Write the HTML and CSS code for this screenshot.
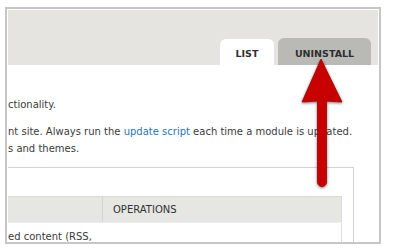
FILE: index.html
```html
<!DOCTYPE html>
<html lang="en">
<head>
    <meta charset="UTF-8">
    <title>Modules</title>
    <link rel="stylesheet" href="styles.css">
</head>
<body>
    <div class="frame">
        <!-- Header with tabs -->
        <div class="header">
            <ul class="tabs">
                <li class="tab active"><a href="#">LIST</a></li>
                <li class="tab"><a href="#">UNINSTALL</a></li>
            </ul>
        </div>

        <!-- Content -->
        <div class="content">
            <p>ctionality.</p>
            <p>nt site. Always run the <a href="#">update script</a> each time a module is updated.<br>s and themes.</p>

            <div class="fieldset">
                <table class="modules">
                    <thead>
                        <tr>
                            <th class="name"></th>
                            <th>OPERATIONS</th>
                        </tr>
                    </thead>
                    <tbody>
                        <tr>
                            <td class="name">ed content (RSS,</td>
                            <td></td>
                        </tr>
                    </tbody>
                </table>
            </div>
        </div>

        <!-- Callout arrow -->
        <svg class="arrow" width="60" height="140" viewBox="295 55 60 140">
            <path d="M321 59 L342 102 L326.5 101 L326.5 182 A4.5 4.5 0 0 1 317.5 182 L317.5 101 L302 102 Z" fill="#c70000" stroke="#a30000" stroke-width="0.8"/>
        </svg>
    </div>
</body>
</html>
```

FILE: styles.css
```css
body {
    margin: 0;
    background: #ffffff;
    font-family: "DejaVu Sans", Verdana, sans-serif;
    color: #3b3b3b;
}
.frame {
    position: relative;
    margin: 7px 0 0 5px;
    width: 370px;
    height: 231px;
    padding: 1px;
    border: 2px solid #c6c6c6;
    overflow: hidden;
}
.header {
    height: 55px;
    background-color: #e5e4e0;
    display: flex;
    justify-content: flex-end;
    align-items: flex-end;
    padding-right: 7px;
}
.tabs {
    display: flex;
    align-items: flex-end;
    gap: 4px;
    margin: 0;
    padding: 0;
    list-style: none;
}
.tab {
    width: 93px;
    height: 27px;
    background-color: #b9bab5;
    border-radius: 6px 6px 0 0;
    display: flex;
    justify-content: center;
    padding-top: 10px;
    box-sizing: border-box;
}
.tab.active {
    width: 54px;
    height: 26px;
    padding-top: 9px;
    background-color: #ffffff;
}
.tab a {
    font-size: 9.5px;
    font-weight: bold;
    color: #2f2f2f;
    text-decoration: none;
}
.content {
    padding-top: 31px;
    font-size: 10px;
    line-height: 17px;
}
.content p {
    margin: 0 0 10px;
    white-space: nowrap;
}
.content a {
    color: #1f78b8;
    text-decoration: none;
}
.fieldset {
    margin: 0 24px 0 0;
    padding: 28px 11px 0 0;
    border: 1px solid #d2d2d2;
    border-left: none;
}
.modules {
    width: 100%;
    border-collapse: collapse;
    border-right: 1px solid #dcdcdc;
}
.modules th {
    height: 25px;
    padding: 0 0 0 10px;
    background-color: #e6e6e2;
    border-top: 1px solid #dadad5;
    border-bottom: 1px solid #ededea;
    font-weight: normal;
    text-align: left;
    color: #333333;
}
.modules th.name,
.modules td.name {
    width: 94px;
    padding-left: 0;
    border-right: 1px solid #d6d6d1;
}
.modules td.name {
    border-right: none;
}
.modules td {
    height: 40px;
    padding: 5px 0 0;
    white-space: nowrap;
    vertical-align: top;
}
.arrow {
    position: absolute;
    left: 288px;
    top: 46px;
    filter: drop-shadow(0 1px 1.5px rgba(0, 0, 0, 0.55));
}
```
